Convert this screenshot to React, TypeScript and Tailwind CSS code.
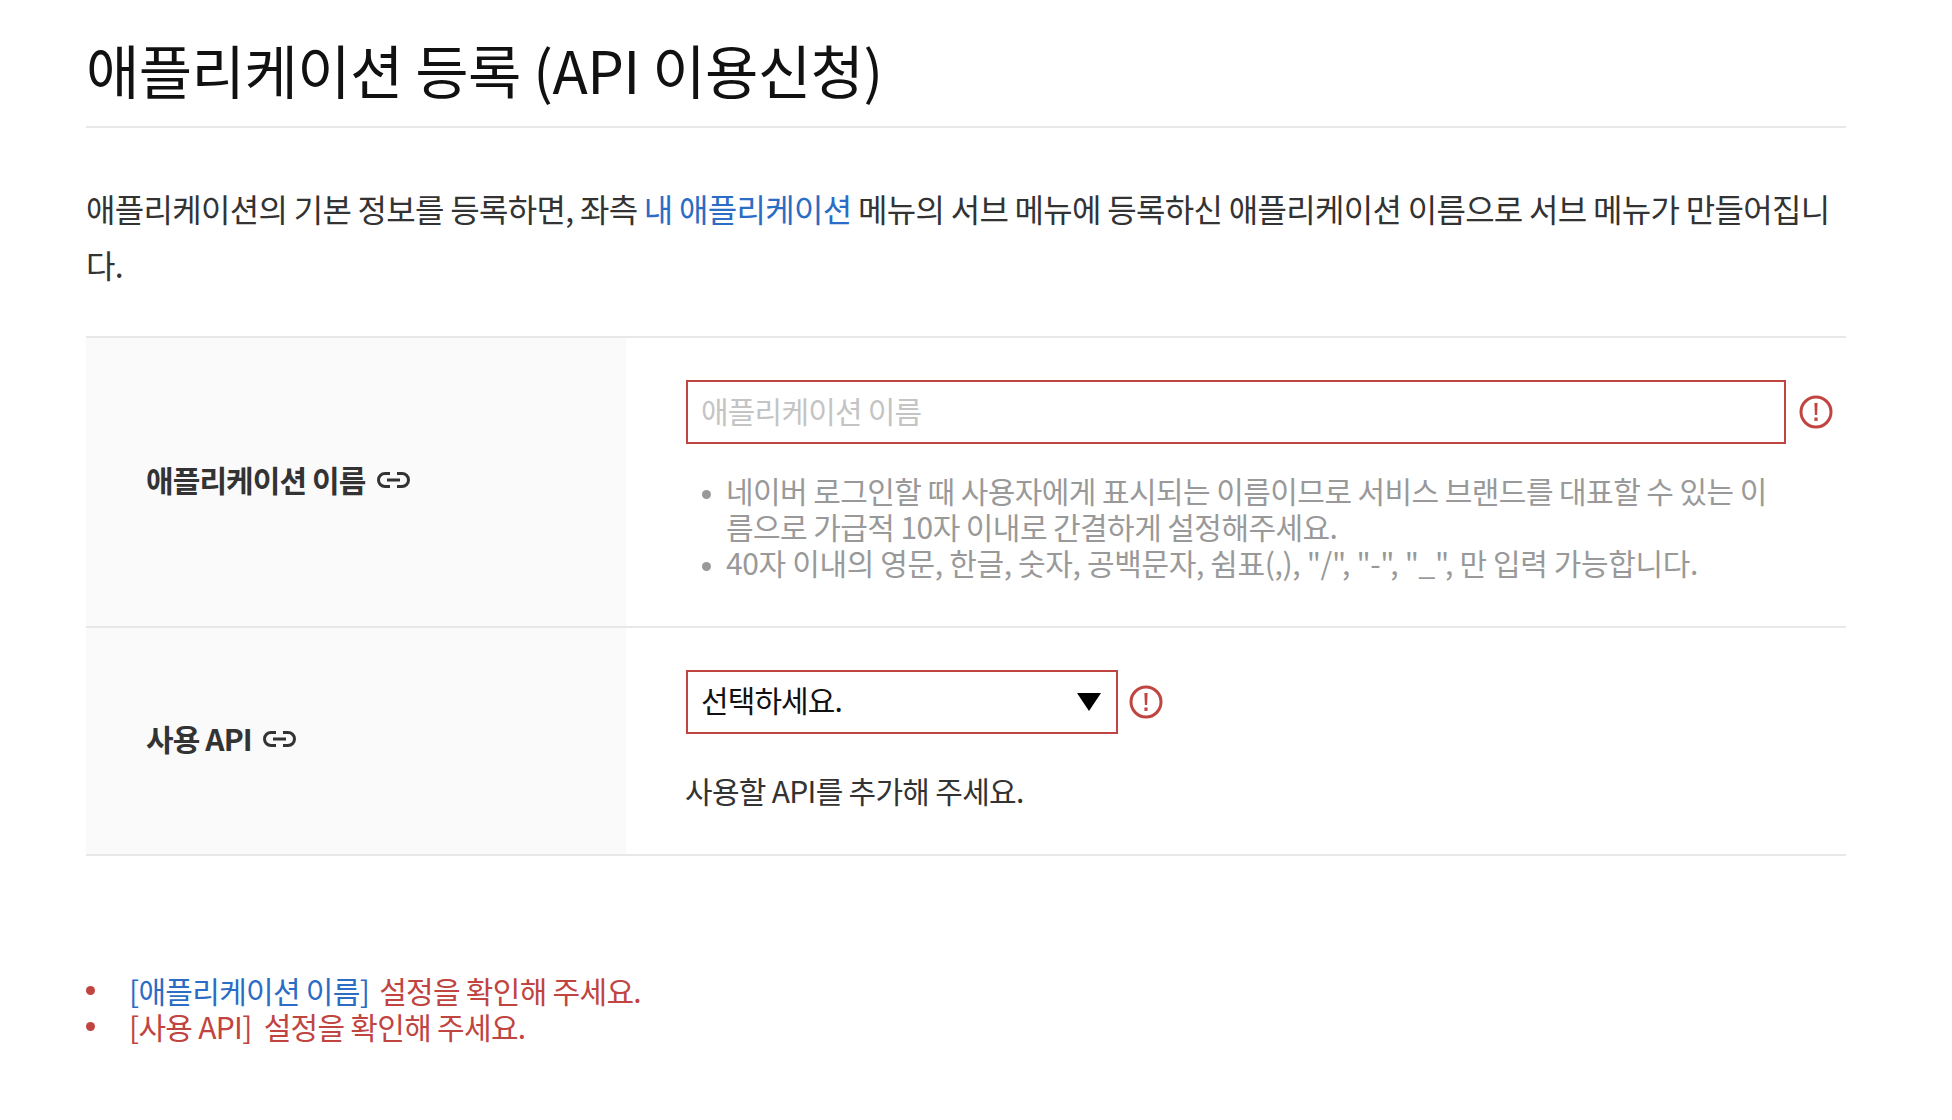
const font = { fontFamily: '"Noto Sans CJK KR", "Liberation Sans", sans-serif' }

const LinkIcon = () => (
  <svg width="33" height="16" viewBox="0 0 33 16" fill="none" stroke="#333333" strokeWidth="3" className="shrink-0">
    <path d="M13 1.5H8a6.5 6.5 0 0 0 0 13h5" />
    <path d="M20 1.5h5a6.5 6.5 0 0 1 0 13h-5" />
    <path d="M10 8h13" />
  </svg>
)

const AlertIcon = () => (
  <svg width="34" height="34" viewBox="0 0 34 34" fill="none" className="shrink-0">
    <circle cx="17" cy="17" r="15" stroke="#c0443f" strokeWidth="3" />
    <path d="M15.4 8h3.2l-.5 12h-2.2z" fill="#c0443f" />
    <rect x="15.4" y="22.5" width="3.2" height="3.4" fill="#c0443f" />
  </svg>
)

const App = () => {
  return (
    <div className="w-[1952px] h-[1120px] bg-white pl-[86px] pr-[106px] overflow-hidden" style={font}>
      <h1 className="h-[128px] pt-[33px] border-b-2 border-[#e8e8e8] text-[58px] leading-[72px] tracking-[-0.55px] text-[#111111] font-normal">
        애플리케이션 등록 (API 이용신청)
      </h1>
      <p className="mt-[52px] text-[32px] leading-[56px] tracking-[-0.7px] text-[#333333]">
        애플리케이션의 기본 정보를 등록하면, 좌측 <span className="text-[#2b6cc4]">내 애플리케이션</span> 메뉴의 서브 메뉴에 등록하신 애플리케이션 이름으로 서브 메뉴가 만들어집니다.
      </p>
      <div className="mt-[44px] border-t-2 border-[#e8e8e8]">
        <div className="flex h-[290px] border-b-2 border-[#e8e8e8]">
          <div className="w-[540px] bg-[#fafafa] flex items-center gap-[11px] pl-[60px] pb-[5px] text-[30px] tracking-[-0.9px] font-bold text-[#333333]">
            애플리케이션 이름 <LinkIcon />
          </div>
          <div className="flex-1 pl-[60px] pt-[42px]">
            <div className="flex items-center gap-[13px]">
              <div className="w-[1100px] h-[64px] border-2 border-[#c0443f] pl-[13px] pb-[3px] flex items-center text-[30px] tracking-[-0.8px] text-[#c4c4c4]">
                애플리케이션 이름
              </div>
              <AlertIcon />
            </div>
            <ul className="mt-[28px] ml-[40px] w-[1052px] text-[30px] leading-[36px] text-[#999999] list-disc marker:text-[22px] marker:text-[#999999]">
              <li className="tracking-[-0.57px]">네이버 로그인할 때 사용자에게 표시되는 이름이므로 서비스 브랜드를 대표할 수 있는 이름으로 가급적 10자 이내로 간결하게 설정해주세요.</li>
              <li className="tracking-[-0.35px]">40자 이내의 영문, 한글, 숫자, 공백문자, 쉼표(,), "/", "-", "_", 만 입력 가능합니다.</li>
            </ul>
          </div>
        </div>
        <div className="flex h-[228px] border-b-2 border-[#e8e8e8]">
          <div className="w-[540px] bg-[#fafafa] flex items-center gap-[11px] pl-[60px] pb-[5px] text-[30px] tracking-[-0.9px] font-bold text-[#333333]">
            사용 API <LinkIcon />
          </div>
          <div className="flex-1 pl-[60px] pt-[42px]">
            <div className="flex items-center gap-[11px]">
              <div className="w-[432px] h-[64px] border-2 border-[#c0443f] pl-[13px] pr-[15px] pb-[5px] flex items-center justify-between text-[30px] tracking-[-0.9px] text-[#111111]">
                선택하세요.
                <svg width="24" height="18" viewBox="0 0 24 18" className="shrink-0 mt-[5px]">
                  <path d="M0 0h24L12 18z" fill="#000000" />
                </svg>
              </div>
              <AlertIcon />
            </div>
            <p className="mt-[38px] -ml-[1px] text-[30px] leading-[36px] tracking-[-0.7px] text-[#333333]">사용할 API를 추가해 주세요.</p>
          </div>
        </div>
      </div>
      <ul className="mt-[116px] text-[30px] leading-[36px] tracking-[-0.7px] text-[#c0443f]">
        <li className="flex items-center gap-[34px]">
          <span className="w-[9px] h-[9px] rounded-full bg-[#c0443f]" />
          <span><span className="text-[#2b6cc4]">[애플리케이션 이름]</span> <span className="ml-1">설정을 확인해 주세요.</span></span>
        </li>
        <li className="flex items-center gap-[34px]">
          <span className="w-[9px] h-[9px] rounded-full bg-[#c0443f]" />
          <span>[사용 API] <span className="ml-[6px]">설정을 확인해 주세요.</span></span>
        </li>
      </ul>
    </div>
  )
}

export default App
